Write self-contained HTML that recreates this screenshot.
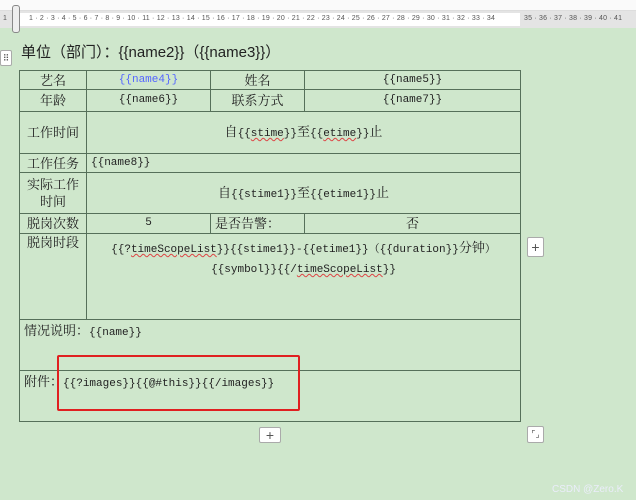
<!DOCTYPE html>
<html><head><meta charset="utf-8"><style>
body{margin:0;width:636px;height:500px;overflow:hidden;background:#cfe7cc;position:relative;font-family:"Liberation Serif","Noto Serif CJK SC",serif;color:#222}
.top{position:absolute;left:0;top:0;width:636px;height:10px;background:#fafafa;border-bottom:1px solid #ddd}
.ruler{position:absolute;left:0;top:11px;width:636px;height:17px;background:#e4e4e4;font:7px "Liberation Sans",sans-serif;color:#555}
.ruler .w{position:absolute;left:18px;top:2px;width:502px;height:13px;background:#fff}
.ruler span{position:absolute;top:4px;letter-spacing:0.2px}
.a{position:absolute}
table{position:absolute;left:19px;top:70px;border-collapse:collapse;width:502px;font-size:13px}
td{border:1px solid #56705a;padding:0 4px;vertical-align:middle;text-align:center;line-height:17px}
.t{font-family:"Liberation Mono","Noto Serif CJK SC",monospace;font-size:11px}
.t b{font-weight:normal;font-size:13px;font-family:"Noto Serif CJK SC",serif}
.btn{position:absolute;background:#fff;border:1px solid #aaa;border-radius:2px;font:14px "Liberation Sans",sans-serif;color:#555;text-align:center}
u{text-decoration:underline wavy #d44;text-decoration-thickness:1px}
</style></head><body>
<div class="top"></div>
<div class="ruler"><div class="w"></div>
<span style="left:3px">1</span><span style="left:29px">1 · 2 · 3 · 4 · 5 · 6 · 7 · 8 · 9 · 10 · 11 · 12 · 13 · 14 · 15 · 16 · 17 · 18 · 19 · 20 · 21 · 22 · 23 · 24 · 25 · 26 · 27 · 28 · 29 · 30 · 31 · 32 · 33 · 34</span><span style="left:524px">35 · 36 · 37 · 38 · 39 · 40 · 41</span></div>
<div class="a" style="left:12px;top:5px;height:26px;border:1px solid #888;border-radius:3px;background:#eee;width:6px"></div>
<div class="btn" style="left:0;top:50px;width:10px;height:14px;font-size:9px;line-height:14px">⠿</div>
<div class="a" style="left:21px;top:41px;font-size:15px;font-family:'Liberation Sans','Noto Sans CJK SC',sans-serif">单位（部门）：{{name2}}（{{name3}}）</div>
<table>
<col style="width:67px"><col style="width:124px"><col style="width:94px"><col>
<tr style="height:19px"><td>艺名</td><td class="t" style="color:#56f">{{name4}}</td><td>姓名</td><td class="t">{{name5}}</td></tr>
<tr style="height:22px"><td>年龄</td><td class="t">{{name6}}</td><td>联系方式</td><td class="t">{{name7}}</td></tr>
<tr style="height:42px"><td>工作时间</td><td colspan="3" class="t"><b>自</b>{{<u>stime</u>}}<b>至</b>{{<u>etime</u>}}<b>止</b></td></tr>
<tr style="height:19px"><td>工作任务</td><td colspan="3" class="t" style="text-align:left">{{name8}}</td></tr>
<tr style="height:41px"><td>实际工作<br>时间</td><td colspan="3" class="t"><b>自</b>{{stime1}}<b>至</b>{{etime1}}<b>止</b></td></tr>
<tr style="height:20px"><td>脱岗次数</td><td class="t">5</td><td style="text-align:left">是否告警：</td><td>否</td></tr>
<tr style="height:86px"><td style="vertical-align:top">脱岗时段</td><td colspan="3" class="t" style="vertical-align:top;padding-top:3px;line-height:20px">{{?<u>timeScopeList</u>}}{{stime1}}-{{etime1}}（{{duration}}<b>分钟</b>）<br>{{symbol}}{{/<u>timeScopeList</u>}}</td></tr>
<tr style="height:51px"><td colspan="4" style="text-align:left;vertical-align:top;padding-top:2px">情况说明：<span class="t">{{name}}</span></td></tr>
<tr style="height:51px"><td colspan="4" style="text-align:left;vertical-align:top;padding-top:2px">附件：<span class="t">{{?images}}{{@#this}}{{/images}}</span></td></tr>
</table>
<div class="a" style="left:57px;top:355px;width:239px;height:52px;border:2px solid #e02020;border-radius:2px"></div>
<div class="btn" style="left:527px;top:237px;width:15px;height:18px;line-height:18px">+</div>
<div class="btn" style="left:259px;top:427px;width:20px;height:14px;line-height:14px">+</div>
<div class="btn" style="left:527px;top:426px;width:15px;height:15px;font-size:9px;line-height:15px">⌜⌟</div>
<div class="a" style="left:552px;top:484px;font:10px 'Liberation Sans',sans-serif;color:#eef;opacity:.9">CSDN @Zero.K</div>
</body></html>
